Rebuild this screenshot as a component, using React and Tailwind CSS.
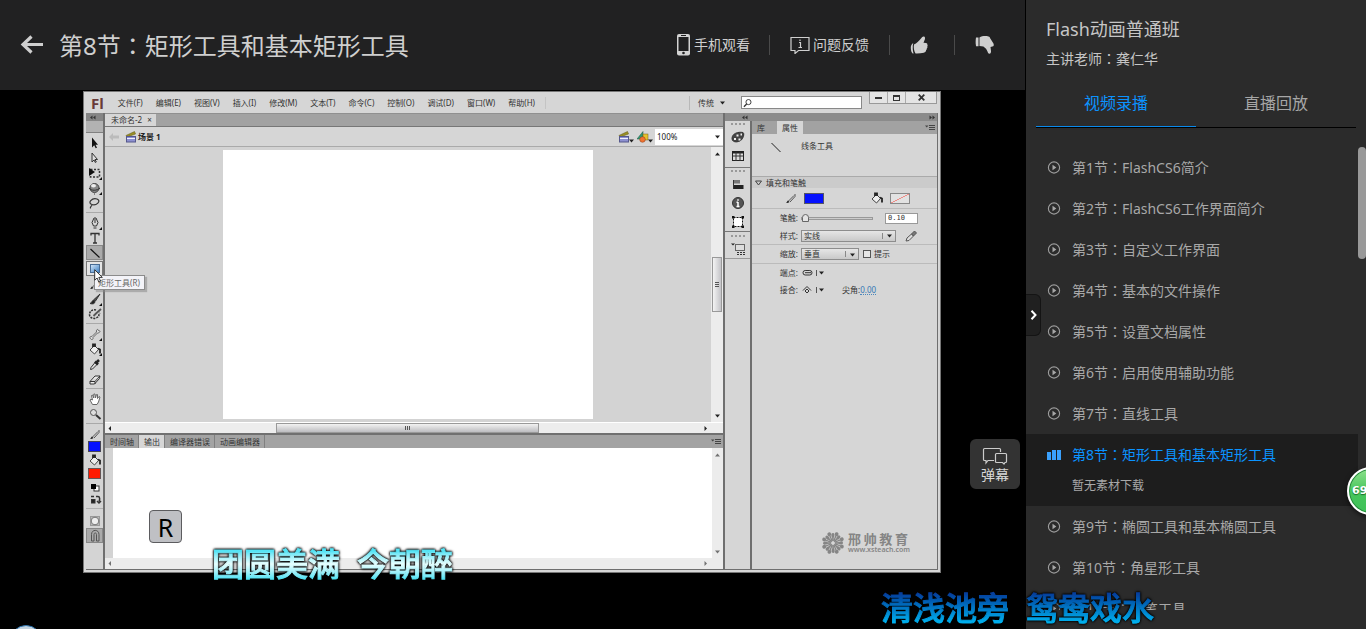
import React from "react";

const FONT =
  "font-['Noto_Sans','Noto_Sans_CJK_SC',sans-serif]";

const LESSONS_BEFORE = [
  ["第1节", "FlashCS6简介"],
  ["第2节", "FlashCS6工作界面简介"],
  ["第3节", "自定义工作界面"],
  ["第4节", "基本的文件操作"],
  ["第5节", "设置文档属性"],
  ["第6节", "启用使用辅助功能"],
  ["第7节", "直线工具"],
];
const LESSONS_AFTER = [
  ["第9节", "椭圆工具和基本椭圆工具"],
  ["第10节", "角星形工具"],
  ["第11节", "铅笔工具"],
];

const MENUS = [
  "文件(F)", "编辑(E)", "视图(V)", "插入(I)", "修改(M)", "文本(T)",
  "命令(C)", "控制(O)", "调试(D)", "窗口(W)", "帮助(H)",
];

// Full-width colon set in the middle of its cell.
function Colon() {
  return <span className="font-['Noto_Sans_CJK_TC',sans-serif]">：</span>;
}

/* ---------- header ---------- */

function Header() {
  return (
    <header className="flex h-[90px] shrink-0 items-center bg-[#212122] pl-5 text-[#cfcfcf]">
      <a href="#back" aria-label="返回" className="mr-[15px] block">
        <svg className="h-5 w-6" viewBox="0 0 24 20" fill="none" stroke="currentColor" strokeWidth="3.200">
          <path d="M3 9.500h20M11.500 1.500L3 9.500l8.500 8" />
        </svg>
      </a>
      <h1 className="text-2xl leading-9 text-[#cfcfcf]">
        第8节<Colon />矩形工具和基本矩形工具
      </h1>
      <div className="ml-auto flex items-center pr-[30px] text-sm leading-5">
        <button className="flex items-center gap-[3px] pr-[19px]">
          <svg className="h-[22px] w-[15px]" viewBox="0 0 15 22">
            <rect x="1" y="0" width="13" height="21.500" rx="2" fill="#d3d3d3" />
            <rect x="2.500" y="3" width="10" height="14" fill="#212122" />
            <rect x="5" y="1" width="5" height="1" fill="#212122" />
            <circle cx="7.500" cy="19" r="1.300" fill="#212122" />
          </svg>
          手机观看
        </button>
        <span className="h-5 w-px bg-[#4a4a4a]" />
        <button className="flex items-center gap-[3px] px-5">
          <svg className="h-[18px] w-5" viewBox="0 0 20 18" fill="none" stroke="#cfcfcf" strokeWidth="1.200">
            <path d="M1 1.500h18v13H8.500L5 17.500v-3H1z" />
            <path d="M9 6.500h1.500v5M8.500 11.500h3.500M10 3.500v1.500" />
          </svg>
          问题反馈
        </button>
        <span className="h-5 w-px bg-[#4a4a4a]" />
        <button aria-label="赞" className="pr-[26px] pl-5">
          <svg className="block h-5 w-[18px]" viewBox="0 0 18 20" fill="#cfcfcf">
            <path d="M3.200 8C1.300 9 .8 11 .8 13s.6 4.600 1.900 5.500h.9C2.700 16 2.400 11.500 3.200 8z" />
            <path d="M4 9.500C6.500 8.500 9 6 11 3.500c1-1.400 2-2.500 3.200-1.900 1.300.7.9 2.600.2 4l-.9 2.200 2.500.1c1 .1 1.500.7 1.300 1.600.5.600.5 1.300 0 1.900.3.700.1 1.400-.5 1.900.2.700-.1 1.400-.7 1.800 0 1.500-.8 2.400-2.300 2.700-2.600.5-5.500.7-8.300.600C4 16 3.400 12.500 4 9.500z" />
          </svg>
        </button>
        <span className="h-5 w-px bg-[#4a4a4a]" />
        <button aria-label="踩" className="pl-5">
          <svg className="block h-5 w-5" viewBox="0 0 20 20" fill="#cfcfcf">
            <path d="M1 2.500h2.500v8.800H1C.5 8.500.5 5 1 2.500z" />
            <path d="M4.500 2.500C7 1 10.500.8 13.500 1.500c1 .2 1.400.8 1.500 1.600l3 4.700c1 1.500 1 2.900.2 3.500l-2.700.7.500 4c.2 1.500-.4 2.500-1.400 2.700-1 .1-1.700-.7-2-1.900-.8-2.200-2-3.700-4.200-5.200L4.500 11z" />
          </svg>
        </button>
      </div>
    </header>
  );
}

/* ---------- authoring window ---------- */

function Glyph({ children, className = "h-3.5 w-3.5" }) {
  return (
    <svg className={`${className} shrink-0`} viewBox="0 0 14 14" fill="none" stroke="#333" strokeWidth="1">
      {children}
    </svg>
  );
}

function Tool({ label, children, corner, active }) {
  return (
    <button
      aria-label={label}
      className={`flex h-[15px] w-full shrink-0 items-center justify-center ${active ? "border border-[#888] bg-[#aaa]" : ""}`}
    >
      <Glyph>
        {children}
        {corner && <path d="M14 11v3h-3z" fill="#111" stroke="none" />}
      </Glyph>
    </button>
  );
}

function ToolRule() {
  return <div className="my-0.5 h-px w-full shrink-0 bg-[#a9a9a9]" />;
}

const Pencil = (
  <>
    <path d="M2 12c1 .3 2.500 0 3.500-1L4 9.500C3 10 3 11.500 2 12z" fill="#222" stroke="none" />
    <path d="M4.500 10L10 4.500M6 11l5-5.500V3" stroke="#555" />
  </>
);
const Bucket = (
  <>
    <path d="M2 8l4.500-4.500 4 4-4 4.500z" fill="#eee" stroke="#444" />
    <path d="M5 5V2.500h2V5M10 6.500l2 1v4" strokeWidth="1.800" stroke="#222" />
  </>
);

function Toolbar() {
  return (
    <div className="relative z-10 flex w-[17px] shrink-0 flex-col items-center bg-[#d4d4d4]">
      <div className="flex h-2 w-full shrink-0 items-center bg-[#858585] pl-1">
        <Chevrons left />
      </div>
      <div className="mb-0.5 h-3 w-full shrink-0 border-b border-[#808080] bg-[#b2b2b2]" />
      <Tool label="选择工具"><path d="M4 1.500v10l2.200-2.200 1.500 3 1.300-.6-1.500-3H10z" fill="#111" stroke="none" /></Tool>
      <Tool label="部分选取工具"><path d="M4 2v9l2-2 1.300 2.500 1-.5L7 8.500h2.500z" fill="#ddd" /></Tool>
      <Tool label="任意变形工具" corner>
        <rect x="2.500" y="3.500" width="9" height="7.500" strokeDasharray="2 1.500" strokeWidth="1.500" />
        <path d="M1 2v8l6-4z" fill="#111" stroke="none" />
      </Tool>
      <Tool label="3D旋转工具" corner>
        <circle cx="6.500" cy="7" r="4.500" fill="#888" stroke="#444" />
        <ellipse cx="5.500" cy="4.800" rx="2.500" ry="1.800" fill="#eee" stroke="none" />
        <path d="M1 7c2 3 8 3 11 0M6.500 12.500v1" />
      </Tool>
      <Tool label="套索工具"><path d="M2.500 12.500c-1-2 2-2.500 1.500-4C-1 7 4 1.500 9 3c5 2-1 7-5 5.500" strokeWidth="1.200" /></Tool>
      <ToolRule />
      <Tool label="钢笔工具" corner>
        <path d="M6 2h2l2 4.500-1.500 3.500h-3L4 6.500zM5.500 12h3M7 3v4" />
      </Tool>
      <Tool label="文本工具"><path d="M3 4.500v-2h8v2M7 2.500v9M5 12h4" strokeWidth="1.300" /></Tool>
      <Tool label="线条工具" active><path d="M2.500 3l9 8.500" stroke="#111" strokeWidth="1.200" /></Tool>
      <div className="relative mt-px flex h-[15px] w-full shrink-0">
        <button aria-label="矩形工具" className="flex w-full items-center justify-center border border-[#777] bg-[#e5e5e5]">
          <span className="h-[9px] w-2.5 border border-[#476b94] bg-gradient-to-br from-[#cfe4f8] to-[#3f83c4]" />
        </button>
        <div className="absolute top-3.5 left-2 flex h-[15px] items-center border border-[#8b8b8b] bg-[#f3f3f8] pr-1 pl-[3px] text-[8px] leading-3 whitespace-nowrap text-[#666] shadow-[2px_2px_1px_#8888]">
          矩形工具(R)
        </div>
        <svg className="absolute top-2 left-2 h-[14px] w-[9px]" viewBox="0 0 9 14">
          <path d="M.7.7v10.500l2.400-2.200 1.700 4 1.700-.8-1.700-3.800h3.500z" fill="#fff" stroke="#222" strokeWidth=".9" />
        </svg>
      </div>
      <Tool label="铅笔工具">{Pencil}</Tool>
      <Tool label="刷子工具" corner>
        <path d="M12 2L6 7.500l1.500 1.500z" fill="#555" />
        <path d="M6 8c-2 0-2 3-4 3.500 3 1 5 0 5-2z" fill="#222" />
      </Tool>
      <Tool label="Deco工具">
        <path d="M8 3C5 2 1.500 4 1.500 7.500S6 12.500 9 10.500 10 8 12 6" strokeWidth="1.500" strokeDasharray="2 1" />
        <path d="M13 2L8 6.500 5.500 9" strokeWidth="1.800" stroke="#555" />
      </Tool>
      <ToolRule />
      <Tool label="骨骼工具" corner>
        <path d="M3 12c-2-1-1-3 1-2.500L8.500 5C8 2.500 10 1.500 10.500 3.500 13 3.500 12 6 9.500 6L5 10.500C5.500 12 4 13.500 3 12z" fill="#ddd" stroke="#666" />
      </Tool>
      <Tool label="颜料桶工具" corner>{Bucket}</Tool>
      <Tool label="滴管工具">
        <path d="M7 5.500l2 2-4.500 4.500-2 .5.500-2z" fill="#ddd" />
        <path d="M7 4.500l3 3M8.500 5.500L11 3" stroke="#222" strokeWidth="2.500" />
      </Tool>
      <Tool label="橡皮擦工具"><path d="M2 9.500L7 4h5l-.5 2.500L6.500 12H2zM2 9.500h5L12 4M7 9.500V12" fill="#eee" /></Tool>
      <ToolRule />
      <Tool label="手形工具">
        <path d="M4.500 12.500L2 8l1-.7L4.500 8 3.500 3.500l1-.5 1.300 3V2H7l.5 4 1-3.500h1V6.500L11 4.500l1 .5-1.500 5-1.500 2.500z" fill="#fff" stroke="#666" />
      </Tool>
      <Tool label="缩放工具">
        <circle cx="5.500" cy="5.500" r="3" fill="#ddd" stroke="#555" />
        <path d="M8 8l4.500 4" stroke="#333" strokeWidth="2" />
      </Tool>
      <ToolRule />
      <Tool label="笔触颜色">{Pencil}</Tool>
      <button aria-label="蓝色笔触" className="h-[11px] w-[13px] shrink-0 border border-[#445] bg-[#0511ff]" />
      <Tool label="填充颜色">{Bucket}</Tool>
      <button aria-label="红色填充" className="mt-px h-[11px] w-[13px] shrink-0 border border-[#655] bg-[#ff1a00]" />
      <Tool label="黑白">
        <rect x="6" y="6" width="5" height="5" fill="#fff" />
        <rect x="3" y="4" width="5" height="5" fill="#000" stroke="none" />
      </Tool>
      <div className="flex h-3 shrink-0 items-center">
        <Glyph>
          <path d="M3 3.500h3M8 3.500h2c2 0 2 3 1 5M13 8l-2 2-2-2" strokeWidth="1.500" />
          <rect x="3.500" y="6.500" width="3.500" height="3.500" fill="#222" />
        </Glyph>
      </div>
      <div className="mt-0.5 mb-1 h-px w-full shrink-0 bg-[#b0b0b0]" />
      <Tool label="对象绘制"><rect x="2.500" y="2.500" width="9" height="9" fill="#bbb" stroke="#999" /><circle cx="7" cy="7" r="3.800" fill="#eee" stroke="#777" /></Tool>
      <Tool label="贴紧至对象" active>
        <path d="M3.500 12V5.500C3.500 0 11 0 11 5.500V12H8.500V5.500c0-2-2.500-2-2.500 0V12z" fill="#aaa" stroke="#555" />
      </Tool>
    </div>
  );
}

function Chevrons({ left }) {
  return (
    <svg className="h-[5px] w-[6px]" viewBox="0 0 6 5" fill="#333">
      {left ? <path d="M0 2.500L2.500.5v4zM3 2.500L5.500.5v4z" /> : <path d="M.5.5L3 2.500l-2.500 2zM3.500.5L6 2.500l-2.500 2z" />}
    </svg>
  );
}

function Arrow({ dir, className = "" }) {
  const d = { up: "M0 4.500h5L2.500 1.500z", down: "M0 1.500h5L2.500 4.500z", left: "M4 0v5L1.500 2.500z", right: "M1.500 0v5L4 2.500z" }[dir];
  return (
    <svg className={`h-[5px] w-[5px] shrink-0 ${className}`} viewBox="0 0 5 5" fill="#222">
      <path d={d} />
    </svg>
  );
}

function PanelMenuIcon() {
  return (
    <svg className="h-[7px] w-2.5" viewBox="0 0 10 7" fill="#444">
      <path d="M0 1.500h3.500L1.700 3.500zM4 1h6v1H4zM4 3h6v1H4zM4 5h6v1H4z" />
    </svg>
  );
}

function Clapper() {
  return (
    <svg className="h-3 w-3" viewBox="0 0 12 12">
      <path d="M1 4.500l8.500-4 1 2.500L2 6z" fill="#9a8f22" stroke="#6b6325" strokeWidth=".6" />
      <rect x="1.500" y="5.500" width="9" height="5.500" fill="#8d90d0" stroke="#55588c" />
      <path d="M2 7.500h8" stroke="#f0f0ff" />
    </svg>
  );
}

function MenuBar() {
  return (
    <div className="flex h-[21px] shrink-0 items-center pl-[5px]">
      <b className="mr-3.5 font-['Open_Sans',sans-serif] text-[15px] leading-4 font-bold text-[#683a38]">Fl</b>
      <nav className="flex items-center gap-[13px]">
        {MENUS.map((m) => (
          <a key={m} href="#menu" className="whitespace-nowrap">{m}</a>
        ))}
      </nav>
      <span className="ml-2.5 h-3 w-px bg-[#c4c4c4]" />
      <div className="ml-auto flex h-full items-center">
        <span className="mr-2 h-3.5 w-px bg-[#b8b8b8]" />
        <button className="flex items-center gap-1.5">传统 <Arrow dir="down" /></button>
        <label className="ml-4 flex h-[13px] w-[121px] items-center border border-[#888] bg-white">
          <svg className="ml-px h-2.5 w-2.5" viewBox="0 0 10 10" fill="none" stroke="#333">
            <circle cx="6" cy="4" r="2.800" /><path d="M4 6L1 9" strokeWidth="1.500" />
          </svg>
          <input aria-label="搜索" className="w-full min-w-0 bg-transparent outline-none" />
        </label>
        <div className="mr-px ml-[7px] flex h-3 self-start border border-t-0 border-[#999] bg-[#e4e4e4]">
          <button aria-label="最小化" className="flex w-[18px] items-end justify-center border-r border-[#aaa] pb-1"><span className="h-0.5 w-[7px] bg-[#333]" /></button>
          <button aria-label="最大化" className="flex w-[18px] items-center justify-center border-r border-[#aaa]"><span className="h-[6px] w-[7px] border border-t-2 border-[#333]" /></button>
          <button aria-label="关闭" className="flex w-[30px] items-center justify-center">
            <svg className="h-[7px] w-[7px]" viewBox="0 0 7 7" stroke="#333" strokeWidth="1.800"><path d="M.7.7l5.600 5.600M6.300.7L.7 6.300" /></svg>
          </button>
        </div>
      </div>
    </div>
  );
}

function Stage() {
  return (
    <div className="flex min-h-0 flex-1">
      <div className="flex min-w-0 flex-1 bg-[#d3d3d3] px-[118px] py-[3px]">
        <div className="flex-1 bg-white" />
      </div>
      <div className="flex w-3 shrink-0 flex-col items-center bg-[#ececec] py-1">
        <Arrow dir="up" />
        <div className="mt-[101px] flex h-[55px] w-2.5 flex-col items-center justify-center gap-px border border-[#999] bg-gradient-to-r from-[#f4f4f4] to-[#c4c4c8]">
          <span className="h-px w-1 bg-[#555]" />
          <span className="h-px w-1 bg-[#555]" />
          <span className="h-px w-1 bg-[#555]" />
        </div>
        <Arrow dir="down" className="mt-auto" />
      </div>
    </div>
  );
}

function BottomTab({ children, active }) {
  return (
    <button className={`h-full border-r border-[#808080] pr-1 pl-[5px] ${active ? "bg-[#d6d6d6]" : ""}`}>{children}</button>
  );
}

function Center() {
  return (
    <div className="flex min-w-0 flex-1 flex-col border-x-2 border-[#6f6f6f]">
      <div className="flex h-3.5 shrink-0 border-t border-b border-t-[#909090] border-b-[#777] bg-[#a2a2a2]">
        <button className="flex h-full items-center gap-[5px] bg-[#d6d6d6] pr-1 pl-1.5">
          未命名-2 <span>×</span>
        </button>
      </div>
      <div className="flex h-5 shrink-0 items-center border-b border-[#aaa] bg-[#d6d6d6] pl-1">
        <svg className="mr-1.5 h-2 w-2.5" viewBox="0 0 10 8" fill="#bbb"><path d="M0 4l4-4v2.500h6v3H4V8z" /></svg>
        <Clapper />
        <span className="ml-px font-bold text-[#222]">场景 1</span>
        <div className="ml-auto flex h-full items-center">
          <button aria-label="编辑场景" className="flex items-end"><Clapper /><Arrow dir="down" className="-ml-px" /></button>
          <button aria-label="编辑元件" className="mr-0.5 ml-[3px] flex items-end">
            <svg className="h-3 w-3" viewBox="0 0 12 12">
              <path d="M0 8l6-7.500V8z" fill="#2f9a78" stroke="#20503f" strokeWidth=".5" />
              <rect x="6" y="3" width="5" height="6" fill="#e5c12d" stroke="#77601a" strokeWidth=".5" />
              <circle cx="5.500" cy="8.500" r="2.800" fill="#ef7432" stroke="#8b3b14" strokeWidth=".5" />
            </svg>
            <Arrow dir="down" className="-ml-px" />
          </button>
          <div className="relative flex h-4 w-[68px] items-center bg-white">
            <select aria-label="缩放比例" className="h-full w-full appearance-none bg-transparent pl-0.5 text-[8px] text-[#222] outline-none">
              <option>100%</option>
            </select>
            <Arrow dir="down" className="pointer-events-none absolute right-[3px]" />
          </div>
        </div>
      </div>
      <Stage />
      <div className="flex h-[11px] shrink-0 items-center border-t border-white bg-[#ededed] pr-[15px] pl-0.5">
        <Arrow dir="left" />
        <div className="flex h-full min-w-0 flex-1 px-[164px]">
          <div className="flex flex-1 items-center justify-center gap-px border border-[#999] bg-gradient-to-b from-[#f2f2f2] to-[#bdbdc0]">
            <span className="h-1 w-px bg-[#555]" />
            <span className="h-1 w-px bg-[#555]" />
            <span className="h-1 w-px bg-[#555]" />
          </div>
        </div>
        <Arrow dir="right" />
      </div>
      <div className="flex h-[15px] shrink-0 items-center border-t-2 border-[#707070] bg-[#a3a3a3] pr-0.5">
        <BottomTab>时间轴</BottomTab>
        <BottomTab active>输出</BottomTab>
        <BottomTab>编译器错误</BottomTab>
        <BottomTab>动画编辑器</BottomTab>
        <span className="ml-auto"><PanelMenuIcon /></span>
      </div>
      <div className="flex h-[110px] shrink-0">
        <div className="w-2 bg-[#d3d3d3]" />
        <div className="flex-1 bg-white pt-[62px] pl-9">
          <kbd className="flex h-[33px] w-[33px] items-center justify-center rounded-[4px] border border-[#5c5c5f] bg-[#bfc0c4] font-['Noto_Sans',sans-serif] text-[25px] leading-8 text-black">R</kbd>
        </div>
        <div className="flex w-[11px] flex-col items-center justify-between bg-[#ececec] py-1">
          <Arrow dir="up" className="opacity-60" />
          <Arrow dir="down" className="opacity-60" />
        </div>
      </div>
      <div className="flex h-[11px] shrink-0 items-center justify-between bg-[#ececec] pr-[15px] pl-0.5">
        <Arrow dir="left" className="opacity-60" />
        <Arrow dir="right" className="opacity-60" />
      </div>
    </div>
  );
}

function Grip() {
  return <div className="my-0.5 w-3.5 border-t-2 border-dotted border-[#999]" />;
}

function DockButton({ label, children }) {
  return (
    <button aria-label={label} className="flex h-[19px] items-center justify-center">
      <Glyph>{children}</Glyph>
    </button>
  );
}

function Dock() {
  return (
    <div className="flex w-[25px] shrink-0 flex-col">
      <div className="flex flex-col items-center border-b border-[#777]">
        <Grip />
        <DockButton label="颜色">
          <path d="M1 8.500c0-5 6-7 11-6 1.500 1 .5 4-.5 6C9.500 12.500 1 13.500 1 8.500z" fill="#444" />
          <path d="M3 9h2M5.500 5.500h2M9.500 4.500h1.500M7.500 9.500h2" stroke="#eee" strokeWidth="2" />
        </DockButton>
        <DockButton label="样本">
          <rect x="1.500" y="2.500" width="11" height="9" fill="#ddd" stroke="#222" />
          <path d="M1.500 3.500h11" strokeWidth="2" stroke="#222" />
          <path d="M1.500 7h11M5 3v9M9 3v9" stroke="#333" />
        </DockButton>
        <div className="h-0.5" />
      </div>
      <div className="flex flex-col items-center border-b border-[#777]">
        <Grip />
        <DockButton label="对齐">
          <path d="M2.500 3v9" strokeWidth="1" />
          <rect x="3" y="3" width="6" height="3.500" fill="#777" stroke="none" />
          <rect x="3" y="8" width="9.500" height="4" fill="#222" stroke="none" />
        </DockButton>
        <DockButton label="信息">
          <circle cx="7" cy="7" r="5.500" fill="#555" />
          <path d="M7 6v4.500M5.500 6.200H7M5.500 10.500h3M7 3.200v1.500" stroke="#fff" strokeWidth="1.500" />
        </DockButton>
        <DockButton label="变形">
          <rect x="2.500" y="2.500" width="9" height="9" fill="#fff" strokeDasharray="2 1" stroke="#111" />
          <path d="M1 1h2.500v2.500H1zM10.500 1H13v2.500h-2.500zM1 10.500h2.500V13H1zM10.500 10.500H13V13h-2.500z" fill="#111" stroke="none" />
        </DockButton>
      </div>
      <div className="flex flex-col items-center border-b border-[#999] pt-px">
        <Grip />
        <DockButton label="代码片断">
          <path d="M0 1.500h4L2 3.500z" fill="#222" stroke="none" />
          <rect x="4.500" y="2.500" width="9" height="6" fill="#ddd" stroke="#666" />
          <path d="M6 10.500h8M6 12.500h8" strokeDasharray="2 1" />
        </DockButton>
      </div>
    </div>
  );
}

function Select({ label, className, children }) {
  return (
    <div className={`relative flex h-3 items-center border border-[#8d8d8d] bg-gradient-to-b from-[#e6e6e6] to-[#c9c9c9] ${className}`}>
      <select aria-label={label} className="h-full w-full appearance-none bg-transparent pl-0.5 text-[8px] leading-[10px] outline-none">
        <option>{children}</option>
      </select>
      <span className="pointer-events-none absolute right-3 h-1.5 w-px bg-[#888]" />
      <Arrow dir="down" className="pointer-events-none absolute right-[3px]" />
    </div>
  );
}

function Label({ children }) {
  return <span className="w-[46px] shrink-0 text-right">{children}:</span>;
}

function Watermark() {
  return (
    <div className="mt-auto mr-[29px] mb-3.5 flex items-center gap-[3px] self-end text-[#858585]">
      <svg className="h-6 w-6" viewBox="-12 -12 24 24" stroke="currentColor" strokeLinecap="round">
        {[0, 45, 90, 135, 180, 225, 270, 315].map((a) => (
          <g key={a} transform={`rotate(${a + 22})`}>
            <path d="M2.500 0H8" strokeWidth="1.300" />
            <path d="M9.500 0h.1" strokeWidth="3.800" />
            <g transform="rotate(22)"><path d="M2.500 0H7" strokeWidth="1.600" /><path d="M7 0h1.500" strokeWidth="3" /></g>
          </g>
        ))}
      </svg>
      <div className="flex w-[60px] flex-col">
        <div className="flex justify-between text-[13px] leading-[14px] font-bold">
          <span>邢</span><span>帅</span><span>教</span><span>育</span>
        </div>
        <span className="text-[7px] leading-2 font-semibold">www.xsteach.com</span>
      </div>
    </div>
  );
}

function Properties() {
  return (
    <div className="flex min-w-0 flex-1 flex-col border-l-2 border-[#6f6f6f]">
      <div className="flex h-[13px] shrink-0 items-center bg-[#a2a2a2] pr-0.5">
        <button className="h-full pr-3 pl-[5px]">库</button>
        <button className="h-full bg-[#d6d6d6] px-[5px]">属性</button>
        <span className="ml-auto"><PanelMenuIcon /></span>
      </div>
      <div className="flex h-[42px] shrink-0 items-start gap-[18px] pt-1.5 pl-[17px]">
        <Glyph><path d="M2.500 3l9 9" stroke="#222" /></Glyph>
        <span className="leading-3">线条工具</span>
      </div>
      <button className="flex h-3 shrink-0 items-center gap-1 border-t border-[#aaa] bg-[#cbcbcb] pl-[3px]">
        <svg className="h-1.5 w-[7px]" viewBox="0 0 7 6" fill="none" stroke="#444"><path d="M.5 1h6L3.500 5z" /></svg>
        填充和笔触
      </button>
      <div className="flex h-[21px] shrink-0 items-center border-b border-[#bbb] pl-8">
        <Glyph>{Pencil}</Glyph>
        <button aria-label="笔触颜色" className="ml-1.5 h-[11px] w-5 border border-[#556] bg-[#0511ff]" />
        <span className="w-[46px]" />
        <Glyph>{Bucket}</Glyph>
        <button aria-label="填充颜色" className="ml-1.5 h-[11px] w-5 border border-[#888] bg-[linear-gradient(to_bottom_right,#e2e2e2_47%,#ef8d88_48%,#ef8d88_53%,#e2e2e2_54%)]" />
      </div>
      <label className="flex h-[18px] shrink-0 items-center">
        <Label>笔触</Label>
        <input
          type="range"
          aria-label="笔触大小"
          defaultValue="0"
          className="mr-3 ml-[3px] h-[3px] w-[72px] appearance-none border border-[#999] bg-[#ccc] [&::-webkit-slider-thumb]:h-2 [&::-webkit-slider-thumb]:w-[7px] [&::-webkit-slider-thumb]:appearance-none [&::-webkit-slider-thumb]:rounded-t-full [&::-webkit-slider-thumb]:border [&::-webkit-slider-thumb]:border-[#666] [&::-webkit-slider-thumb]:bg-[#e4e4e4]"
        />
        <input aria-label="笔触值" defaultValue="0.10" className="h-[11px] w-[33px] border border-[#999] bg-white pl-0.5 font-['DejaVu_Sans_Mono',monospace] text-[7px]" />
      </label>
      <div className="flex h-[18px] shrink-0 items-center border-b border-[#bbb]">
        <Label>样式</Label>
        <Select label="样式" className="mr-2 ml-[3px] w-[95px]">实线</Select>
        <Glyph><path d="M2 12l1-3 4.500-4 2 2-4.500 4.500z" fill="#ddd" stroke="#555" /><path d="M7.500 5l2 2L12.500 4 10.500 2z" fill="#777" stroke="#555" /></Glyph>
      </div>
      <div className="flex h-[19px] shrink-0 items-center border-b border-[#bbb]">
        <Label>缩放</Label>
        <Select label="缩放" className="mr-1 ml-[3px] w-[58px]">垂直</Select>
        <label className="flex items-center gap-[3px]">
          <input type="checkbox" className="h-2 w-2 appearance-none border border-[#555] bg-[#e6e6e6]" />
          提示
        </label>
      </div>
      <div className="flex h-[17px] shrink-0 items-center">
        <Label>端点</Label>
        <button aria-label="端点样式" className="ml-1 flex items-center gap-0.5">
          <svg className="h-2 w-3" viewBox="0 0 12 8" fill="none" stroke="#333"><rect x="1" y="1.500" width="9" height="4.500" rx="2.200" /><path d="M3 3.700h6" /></svg>
          <span className="h-1.5 w-px bg-[#555]" />
          <Arrow dir="down" />
        </button>
      </div>
      <div className="flex h-[17px] shrink-0 items-center">
        <Label>接合</Label>
        <button aria-label="接合样式" className="ml-1 flex items-center gap-0.5">
          <svg className="h-2 w-3" viewBox="0 0 12 8" fill="none" stroke="#333"><path d="M1 4.500l4-4 4 4M3 5l2-2 2 2-2 2z" /></svg>
          <span className="h-1.5 w-px bg-[#555]" />
          <Arrow dir="down" />
        </button>
        <span className="ml-[18px]">尖角:</span>
        <a href="#miter" className="border-b border-dotted border-[#4b87bb] leading-[9px] text-[#3478b5]">0.00</a>
      </div>
      <Watermark />
    </div>
  );
}

function FlashWindow() {
  return (
    <div className="flex min-w-0 flex-1 flex-col border border-[#777] bg-[#d6d6d6] px-0.5 pb-0.5 text-[8px] leading-3 text-[#333]">
      <MenuBar />
      <div className="flex min-h-0 flex-1 border-b border-[#6f6f6f]">
        <Toolbar />
        <Center />
        <div className="flex w-[213px] shrink-0 flex-col border-r border-[#6f6f6f]">
          <div className="flex h-2 shrink-0 items-center justify-between bg-[#8b8b8b] pr-0.5 pl-[17px]">
            <Chevrons left />
            <Chevrons />
          </div>
          <div className="flex min-h-0 flex-1">
            <Dock />
            <Properties />
          </div>
        </div>
      </div>
    </div>
  );
}

/* ---------- course sidebar ---------- */

function PlayIcon() {
  return (
    <svg className="h-3.5 w-3.5 shrink-0" viewBox="0 0 14 14">
      <circle cx="7" cy="6.500" r="5.600" fill="none" stroke="#9d9d9d" strokeWidth="1.100" />
      <path d="M5.500 3.800v5.400L9.300 6.500z" fill="#a8a8a8" />
    </svg>
  );
}

function Lesson({ item }) {
  return (
    <li>
      <a href="#lesson" className="flex h-[41px] items-center gap-[11px] pl-[21px]">
        <PlayIcon />
        <span className="whitespace-nowrap">{item[0]}<Colon />{item[1]}</span>
      </a>
    </li>
  );
}

function Sidebar() {
  return (
    <aside className="relative flex w-[341px] shrink-0 flex-col border-l border-black bg-[#2b2b2b]">
      <div className="px-5 pt-[15px]">
        <h2 className="text-lg leading-7 text-[#c6c6c6]">Flash动画普通班</h2>
        <p className="mt-[3px] text-sm leading-6 text-[#c6c6c6]">主讲老师<Colon />龚仁华</p>
      </div>
      <nav className="mx-2.5 mt-[9px] flex h-12 shrink-0 border-b border-black text-base">
        <a href="#video" className="flex-1 border-b border-[#0a8aec] text-center leading-[46px] text-[#0b93ff]">视频录播</a>
        <a href="#live" className="flex-1 text-center leading-[46px] text-[#a6a6a6]">直播回放</a>
      </nav>
      <div className="mt-[19px] mb-[19px] flex min-h-0 flex-1 overflow-hidden">
        <ul className="min-w-0 flex-1 text-sm leading-5 text-[#a8a8a8]">
          {LESSONS_BEFORE.map((l) => <Lesson key={l[0]} item={l} />)}
          <li className="h-[72px] bg-[#1d1d1d]">
            <a href="#lesson8" className="flex h-10 items-center gap-[11px] pl-[21px] text-[#0b93ff]">
              <svg className="h-3.5 w-3.5 shrink-0" viewBox="0 0 14 14" fill="#3aa0fb">
                <path d="M0 5h4v8H0zM5 3h4v10H5zM10 3h4v10h-4z" />
              </svg>
              <span className="whitespace-nowrap">第8节<Colon />矩形工具和基本矩形工具</span>
            </a>
            <p className="pl-[46px] text-xs leading-6 text-[#a8a8a8]">暂无素材下载</p>
          </li>
          {LESSONS_AFTER.map((l) => <Lesson key={l[0]} item={l} />)}
        </ul>
        <div className="w-2 shrink-0"><div className="h-28 w-full rounded-full bg-[#999]" /></div>
      </div>
      <button aria-label="收起" className="absolute top-[294px] left-0 flex h-[42px] w-[15px] items-center justify-center rounded-r-md border border-l-0 border-[#141414] bg-[#202020]">
        <svg className="h-2.5 w-2" viewBox="0 0 8 10" fill="none" stroke="#fff" strokeWidth="2"><path d="M2.500.8L6.500 5l-4 4.200" /></svg>
      </button>
    </aside>
  );
}

/* ---------- overlays ---------- */

function Lyric({ parts, className }) {
  return (
    <p className={`pointer-events-none absolute flex gap-[17px] text-[32px] leading-9 font-medium whitespace-nowrap [filter:drop-shadow(0_0_1px_#000)_drop-shadow(0_0_1px_#000)] ${className}`}>
      {parts.map((p) => (
        <span key={p[1]} className={`bg-clip-text text-transparent [-webkit-text-stroke:1px_transparent] ${p[0]}`}>{p[1]}</span>
      ))}
    </p>
  );
}

const CYAN = "bg-gradient-to-b from-[#55e4f5] from-15% via-[#e6ffff] via-50% to-[#55e4f5] to-90%";
const BLUE = "bg-gradient-to-b from-[#063e9c] from-10% to-[#00b0ee] to-90%";

export default function App() {
  return (
    <div className={`relative flex h-screen overflow-hidden bg-black ${FONT}`}>
      <main className="flex min-w-0 flex-1 flex-col">
        <Header />
        <section className="flex min-h-0 flex-1 pt-px pr-[84px] pb-14 pl-[83px]">
          <FlashWindow />
        </section>
      </main>
      <Sidebar />

      <button className="absolute right-[346px] bottom-[140px] flex h-[50px] w-[50px] flex-col items-center justify-center rounded-md bg-[#333] text-sm leading-5 text-[#d8d8d8]">
        <svg className="mt-1 h-[18px] w-[26px]" viewBox="0 0 26 18" fill="none" stroke="#ccc" strokeWidth="1.200">
          <path d="M12 13.500H6L4 16v-2.500H2.500c-.6 0-1-.4-1-1v-10c0-.6.4-1 1-1h15c.6 0 1 .4 1 1V5" />
          <path d="M14.500 6.500h9c.6 0 1 .4 1 1v7c0 .6-.4 1-1 1H23l-1 1.500-1.500-1.500h-6c-.6 0-1-.4-1-1v-7c0-.6.4-1 1-1z" />
        </svg>
        弹幕
      </button>

      <Lyric parts={[[CYAN, "团圆美满"], [CYAN, "今朝醉"]]} className="bottom-[47px] left-[212px]" />
      <Lyric parts={[[BLUE, "清浅池旁"], [BLUE, "鸳鸯戏水"]]} className="right-[212px] bottom-[3px]" />

      <div className="absolute right-[-29px] bottom-[114px] flex h-12 w-12 items-center rounded-full border-2 border-white bg-gradient-to-b from-[#8ce08c] via-[#46c65c] to-[#3fc158] pl-[3px] font-['DejaVu_Sans',sans-serif] text-[11px] leading-4 font-bold text-white shadow-[0_2px_5px_#0009] [text-shadow:0_1px_1px_#1a6a2a] ring-inset ring-1 ring-[#27883c]">
        69
      </div>
      <div className="absolute -bottom-7 left-[10px] h-8 w-8 rounded-full border border-[#2d73ad] bg-[#c3d3e0]" />
    </div>
  );
}
